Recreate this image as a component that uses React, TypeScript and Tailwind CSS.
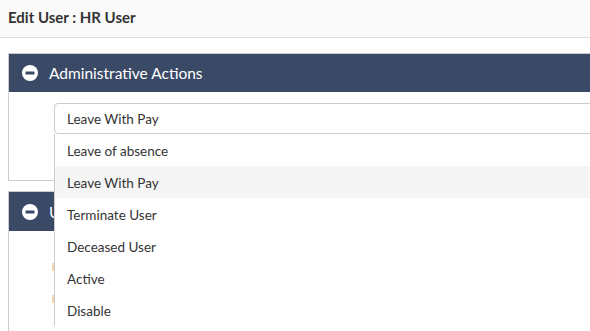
import React from "react";

const options = [
  "Leave of absence",
  "Leave With Pay",
  "Terminate User",
  "Deceased User",
  "Active",
  "Disable",
];

function MinusCircle() {
  return (
    <svg width="16" height="16" viewBox="0 0 16 16" className="shrink-0">
      <circle cx="8" cy="8" r="8" fill="#ffffff" />
      <rect x="3.5" y="6.5" width="9" height="3" rx="0.5" fill="#3a4a66" />
    </svg>
  );
}

export default function App() {
  return (
    <div
      className="relative w-[590px] h-[331px] overflow-hidden bg-white text-[#333333]"
      style={{ fontFamily: "Lato, 'Noto Sans', sans-serif" }}
    >
      <div className="h-[38px] bg-[#fafafa] border-b border-[#dddddd] px-2 flex items-center">
        <h1 className="text-[15px] font-bold leading-none -mt-[2px]">Edit User : HR User</h1>
      </div>
      <div className="w-[760px] pl-2 pt-[15px]">
        <div className="border border-[#cccccc]">
          <div className="h-[38px] bg-[#3a4a66] flex items-center pl-[13px] gap-[11px] text-white text-[15.5px]">
            <MinusCircle />
            <span className="pt-[2px]">Administrative Actions</span>
          </div>
          <div className="h-[88px] pl-[45px] pt-[11px]">
            <div className="h-[31px] border border-[#cccccc] rounded-[4px] flex items-center pl-3 pt-[1px] text-[13.5px]">
              Leave With Pay
            </div>
          </div>
        </div>
        <div className="mt-[10px] border border-[#cccccc]">
          <div className="h-[39px] bg-[#3a4a66] flex items-center pl-[13px] gap-[11px] text-white text-[15.5px]">
            <MinusCircle />
            <span className="pt-[2px]">User Information</span>
          </div>
          <div className="h-[120px] pl-[43px] pt-[32px] flex flex-col gap-[24px]">
            <div className="w-[40px] h-[8px] bg-[#f0d9b0]" />
            <div className="w-[40px] h-[8px] bg-[#f0d9b0]" />
          </div>
        </div>
      </div>
      <div className="absolute left-[54px] top-[134px] w-[700px] bg-white border-l border-[#cccccc] flex flex-col text-[13.5px]">
        {options.map((o) => (
          <div
            key={o}
            className={`h-[32px] flex items-center pl-[12px] pt-[2px] ${o === "Leave With Pay" ? "bg-[#f5f5f5]" : ""}`}
          >
            {o}
          </div>
        ))}
      </div>
    </div>
  );
}
